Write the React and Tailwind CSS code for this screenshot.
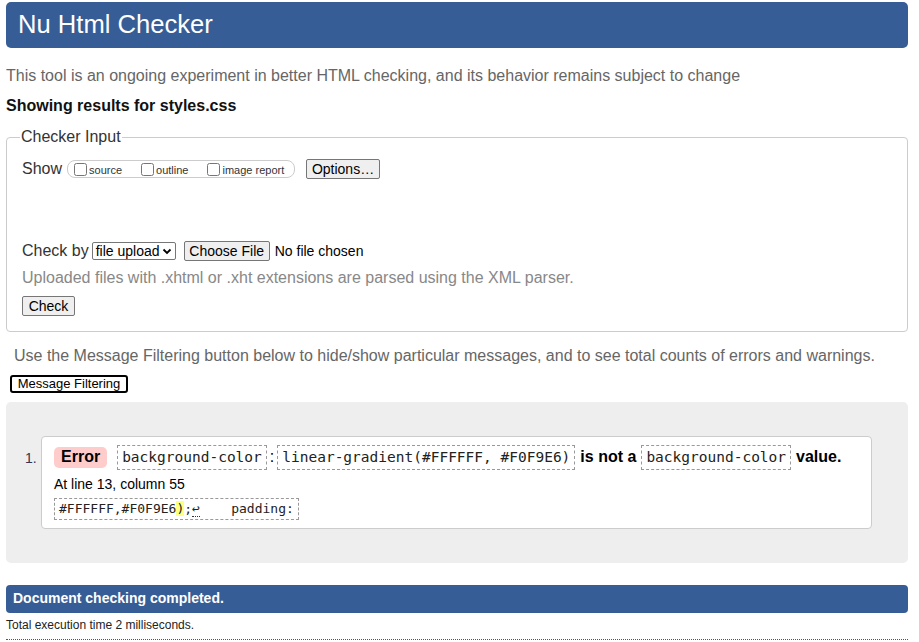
import React from "react";

const sans = { fontFamily: '"Liberation Sans", Arial, sans-serif' };
const mono = '"DejaVu Sans Mono", "Liberation Mono", monospace';

// dashed code chip used in the message line
const Code = ({ children }) => (
  <code
    className="inline-block border border-dashed border-[#999] px-[4px] leading-[23px] text-[14.5px] text-[#222]"
    style={{ fontFamily: mono }}
  >
    {children}
  </code>
);

const NativeButton = ({ children, className = "" }) => (
  <span
    className={
      "inline-flex items-center justify-center h-[20px] bg-[#efefef] border border-[#767676] rounded-[2px] text-[14px] text-black " +
      className
    }
  >
    {children}
  </span>
);

const Check = ({ label }) => (
  <label className="flex items-center gap-[2px]">
    <input type="checkbox" className="w-[13px] h-[13px] m-0" />
    <span className="text-[11px] text-[#333] leading-[13px] mt-[3px]">{label}</span>
  </label>
);

export default function App() {
  return (
    <div className="bg-white min-h-[642px] px-[6px] w-[914px]" style={sans}>
      {/* header */}
      <div className="mt-[2px] h-[46px] bg-[#365d95] rounded-[5px] flex items-center pl-[12px]">
        <h1 className="text-[25.6px] text-white leading-none">Nu Html Checker</h1>
      </div>

      <p className="mt-[19px] text-[16px] leading-[18px] text-[#666]">
        This tool is an ongoing experiment in better HTML checking, and its behavior remains subject to change
      </p>
      <p className="mt-[12px] text-[16px] leading-[18px] font-bold text-[#111]">
        Showing results for styles.css
      </p>

      {/* checker input */}
      <fieldset className="mt-[13px] border border-[#ccc] rounded-[4px] px-[15px] pb-[13px]">
        <legend className="ml-[-2px] px-[1px] text-[16px] leading-[18px] text-[#333]">Checker Input</legend>

        <div className="mt-[13px] flex items-center h-[20px]">
          <span className="text-[16px] text-[#333]">Show</span>
          <div className="ml-[5px] h-[18px] w-[228px] border border-[#ccc] rounded-[8px] flex items-center pl-[6px] gap-[19px]">
            <Check label="source" />
            <Check label="outline" />
            <Check label="image report" />
          </div>
          <NativeButton className="ml-[11px] w-[74px]">Options…</NativeButton>
        </div>

        <div className="mt-[62px] flex items-center h-[20px]">
          <span className="text-[16px] text-[#333]">Check by</span>
          <span className="ml-[3px] h-[18px] w-[84px] border border-[#767676] rounded-[2px] flex items-center justify-between pl-[3px] pr-[3px] text-[14px] text-black">
            file upload
            <svg width="10" height="10" viewBox="0 0 10 10">
              <path d="M1.5 3.5 L5 7 L8.5 3.5" fill="none" stroke="#000" strokeWidth="1.8" />
            </svg>
          </span>
          <NativeButton className="ml-[8px] w-[86px]">Choose File</NativeButton>
          <span className="ml-[5px] text-[14px] text-black">No file chosen</span>
        </div>

        <p className="mt-[8px] text-[16px] leading-[18px] text-[#888]">
          Uploaded files with .xhtml or .xht extensions are parsed using the XML parser.
        </p>

        <NativeButton className="mt-[9px] w-[53px]">Check</NativeButton>
      </fieldset>

      <p className="mt-[15px] pl-[8px] text-[16px] leading-[18px] text-[#666]">
        Use the Message Filtering button below to hide/show particular messages, and to see total counts of errors and warnings.
      </p>
      <span className="mt-[10px] ml-[4px] inline-flex items-center justify-center h-[18px] w-[118px] border-2 border-black rounded-[3px] bg-white text-[13px] text-black">
        Message Filtering
      </span>

      {/* results */}
      <div className="mt-[7px] h-[161px] bg-[#eeeeee] rounded-[5px] pt-[34px] pl-[19px] pr-[36px]">
        <ol className="flex">
          <li className="w-[16px] pt-[14px] text-[14px] text-[#335] leading-[16px]">1.</li>
          <li className="flex-1 bg-white border border-[#ccc] rounded-[4px] pl-[12px] pt-[8px] pb-[8px] h-[93px]">
            <div className="flex items-center text-[16px] text-black">
              <strong className="inline-flex items-center h-[21px] px-[7px] bg-[#ffcccc] rounded-[5px] text-[16px]">
                Error
              </strong>
              <span className="w-[10px]" />
              <Code>background-color</Code>
              <span className="px-[3px]">:</span>
              <Code>linear-gradient(#FFFFFF, #F0F9E6)</Code>
              <strong className="px-[5px]">is not a</strong>
              <Code>background-color</Code>
              <strong className="px-[5px]">value.</strong>
            </div>
            <p className="mt-[6px] text-[14px] leading-[16px] text-black">At line 13, column 55</p>
            <code
              className="mt-[6px] inline-block border border-dashed border-[#999] px-[4px] leading-[20px] text-[13px] text-[#222] whitespace-pre"
              style={{ fontFamily: mono }}
            >
              #FFFFFF,#F0F9E6<span className="bg-[#ffff80]">)</span>;
              <span className="border-b border-dotted border-[#333]">↩</span>
              {"    padding:"}
            </code>
          </li>
        </ol>
      </div>

      {/* completion */}
      <div className="mt-[22px] h-[28px] bg-[#365d95] rounded-[4px] flex items-center pl-[7px]">
        <span className="text-[14px] font-bold text-white">Document checking completed.</span>
      </div>
      <p className="mt-[5px] text-[12px] leading-[14px] text-[#222]">Total execution time 2 milliseconds.</p>
      <div className="mt-[7px] border-b border-dotted border-[#555]" />
    </div>
  );
}
